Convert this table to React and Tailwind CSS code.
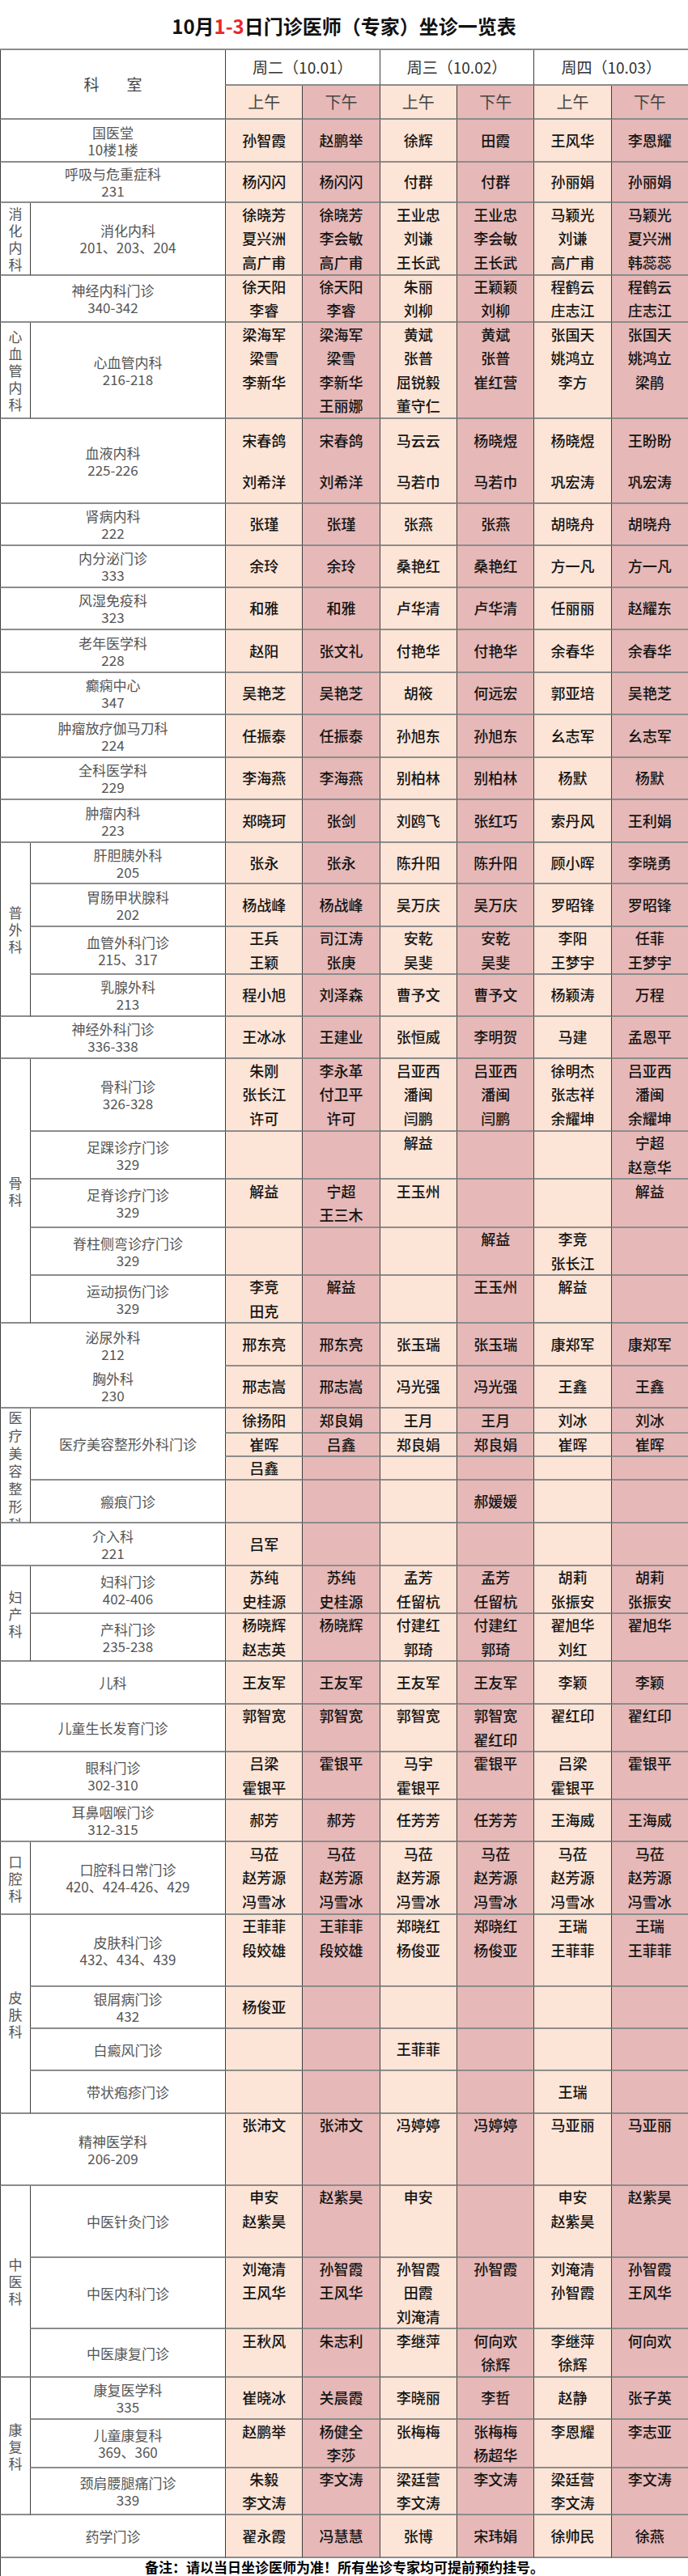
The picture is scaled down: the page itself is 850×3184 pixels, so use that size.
import React from 'react';

const LINE = 'border-[#3f3f3f]';
const HLINE = 'border-b-2 border-b-[#8c8c8c]';
const shade = ['bg-[#fce4d6]', 'bg-[#e6b8b7]'];

const R = (h, label, cols, slots = 1, more = {}) => ({ h, label, cols, slots, ...more });

const sections = [
  { row: R('h-[53px]', ['国医堂', '10楼1楼'], ['孙智霞', '赵鹏举', '徐辉', '田霞', '王风华', '李恩耀']) },
  { row: R('h-[50px]', ['呼吸与危重症科', '231'], ['杨闪闪', '杨闪闪', '付群', '付群', '孙丽娟', '孙丽娟']) },
  {
    group: '消化内科',
    rows: [
      R('h-[90px]', ['消化内科', '201、203、204'], [
        ['徐晓芳', '夏兴洲', '高广甫'],
        ['徐晓芳', '李会敏', '高广甫'],
        ['王业忠', '刘谦', '王长武'],
        ['王业忠', '李会敏', '王长武'],
        ['马颖光', '刘谦', '高广甫'],
        ['马颖光', '夏兴洲', '韩蕊蕊'],
      ], 3),
    ],
  },
  {
    row: R('h-[58px]', ['神经内科门诊', '340-342'], [
      ['徐天阳', '李睿'], ['徐天阳', '李睿'], ['朱丽', '刘柳'], ['王颖颖', '刘柳'], ['程鹤云', '庄志江'], ['程鹤云', '庄志江'],
    ], 2),
  },
  {
    group: '心血管内科',
    rows: [
      R('h-[119px]', ['心血管内科', '216-218'], [
        ['梁海军', '梁雪', '李新华'],
        ['梁海军', '梁雪', '李新华', '王丽娜'],
        ['黄斌', '张普', '屈锐毅', '董守仁'],
        ['黄斌', '张普', '崔红营'],
        ['张国天', '姚鸿立', '李方'],
        ['张国天', '姚鸿立', '梁鹃'],
      ], 4),
    ],
  },
  {
    row: R('h-[105px]', ['血液内科', '225-226'], [
      ['宋春鸽', '刘希洋'], ['宋春鸽', '刘希洋'], ['马云云', '马若巾'], ['杨晓煜', '马若巾'], ['杨晓煜', '巩宏涛'], ['王盼盼', '巩宏涛'],
    ], 2, { tall: true }),
  },
  { row: R('h-[52px]', ['肾病内科', '222'], ['张瑾', '张瑾', '张燕', '张燕', '胡晓舟', '胡晓舟']) },
  { row: R('h-[52px]', ['内分泌门诊', '333'], ['余玲', '余玲', '桑艳红', '桑艳红', '方一凡', '方一凡']) },
  { row: R('h-[52px]', ['风湿免疫科', '323'], ['和雅', '和雅', '卢华清', '卢华清', '任丽丽', '赵耀东']) },
  { row: R('h-[53px]', ['老年医学科', '228'], ['赵阳', '张文礼', '付艳华', '付艳华', '余春华', '余春华']) },
  { row: R('h-[52px]', ['癫痫中心', '347'], ['吴艳芝', '吴艳芝', '胡筱', '何远宏', '郭亚培', '吴艳芝']) },
  { row: R('h-[53px]', ['肿瘤放疗伽马刀科', '224'], ['任振泰', '任振泰', '孙旭东', '孙旭东', '幺志军', '幺志军']) },
  { row: R('h-[52px]', ['全科医学科', '229'], ['李海燕', '李海燕', '别柏林', '别柏林', '杨默', '杨默']) },
  { row: R('h-[53px]', ['肿瘤内科', '223'], ['郑晓珂', '张剑', '刘鸥飞', '张红巧', '索丹风', '王利娟']) },
  {
    group: '普外科',
    rows: [
      R('h-[51px]', ['肝胆胰外科', '205'], ['张永', '张永', '陈升阳', '陈升阳', '顾小晖', '李晓勇']),
      R('h-[53px]', ['胃肠甲状腺科', '202'], ['杨战峰', '杨战峰', '吴万庆', '吴万庆', '罗昭锋', '罗昭锋']),
      R('h-[59px]', ['血管外科门诊', '215、317'], [
        ['王兵', '王颖'], ['司江涛', '张庚'], ['安乾', '吴斐'], ['安乾', '吴斐'], ['李阳', '王梦宇'], ['任菲', '王梦宇'],
      ], 2),
      R('h-[52px]', ['乳腺外科', '213'], ['程小旭', '刘泽森', '曹予文', '曹予文', '杨颖涛', '万程']),
    ],
  },
  { row: R('h-[52px]', ['神经外科门诊', '336-338'], ['王冰冰', '王建业', '张恒威', '李明贺', '马建', '孟恩平']) },
  {
    group: '骨科',
    rows: [
      R('h-[90px]', ['骨科门诊', '326-328'], [
        ['朱刚', '张长江', '许可'],
        ['李永革', '付卫平', '许可'],
        ['吕亚西', '潘闽', '闫鹏'],
        ['吕亚西', '潘闽', '闫鹏'],
        ['徐明杰', '张志祥', '余耀坤'],
        ['吕亚西', '潘闽', '余耀坤'],
      ], 3),
      R('h-[59px]', ['足踝诊疗门诊', '329'], [[], [], ['解益'], [], [], ['宁超', '赵意华']], 2),
      R('h-[60px]', ['足脊诊疗门诊', '329'], [['解益'], ['宁超', '王三木'], ['王玉州'], [], [], ['解益']], 2),
      R('h-[59px]', ['脊柱侧弯诊疗门诊', '329'], [[], [], [], ['解益'], ['李竞', '张长江'], []], 2),
      R('h-[59px]', ['运动损伤门诊', '329'], [['李竞', '田克'], ['解益'], [], ['王玉州'], ['解益'], []], 2),
    ],
  },
  { row: R('h-[53px]', ['泌尿外科', '212'], ['邢东亮', '邢东亮', '张玉瑞', '张玉瑞', '康郑军', '康郑军'], 1, { open: true }) },
  { row: R('h-[52px]', ['胸外科', '230'], ['邢志嵩', '邢志嵩', '冯光强', '冯光强', '王鑫', '王鑫']) },
  {
    group: '医疗美容整形科',
    top: true,
    h: 'h-[142px]',
    rows: [
      R('h-[89px]', ['医疗美容整形外科门诊'], null, 1, {
        strips: [
          { h: 'h-[31px]', cols: ['徐扬阳', '郑良娟', '王月', '王月', '刘冰', '刘冰'] },
          { h: 'h-[29px]', cols: ['崔晖', '吕鑫', '郑良娟', '郑良娟', '崔晖', '崔晖'] },
          { h: 'h-[29px]', cols: ['吕鑫', '', '', '', '', ''] },
        ],
      }),
      R('h-[53px]', ['瘢痕门诊'], ['', '', '', '郝媛媛', '', '']),
    ],
  },
  { row: R('h-[53px]', ['介入科', '221'], ['吕军', '', '', '', '', '']) },
  {
    group: '妇产科',
    rows: [
      R('h-[59px]', ['妇科门诊', '402-406'], [
        ['苏纯', '史桂源'], ['苏纯', '史桂源'], ['孟芳', '任留杭'], ['孟芳', '任留杭'], ['胡莉', '张振安'], ['胡莉', '张振安'],
      ], 2),
      R('h-[59px]', ['产科门诊', '235-238'], [
        ['杨晓辉', '赵志英'], ['杨晓辉'], ['付建红', '郭琦'], ['付建红', '郭琦'], ['翟旭华', '刘红'], ['翟旭华'],
      ], 2),
    ],
  },
  { row: R('h-[53px]', ['儿科'], ['王友军', '王友军', '王友军', '王友军', '李颖', '李颖']) },
  {
    row: R('h-[59px]', ['儿童生长发育门诊'], [
      ['郭智宽'], ['郭智宽'], ['郭智宽'], ['郭智宽', '翟红印'], ['翟红印'], ['翟红印'],
    ], 2),
  },
  {
    row: R('h-[59px]', ['眼科门诊', '302-310'], [
      ['吕梁', '霍银平'], ['霍银平'], ['马宇', '霍银平'], ['霍银平'], ['吕梁', '霍银平'], ['霍银平'],
    ], 2),
  },
  { row: R('h-[52px]', ['耳鼻咽喉门诊', '312-315'], ['郝芳', '郝芳', '任芳芳', '任芳芳', '王海威', '王海威']) },
  {
    group: '口腔科',
    rows: [
      R('h-[90px]', ['口腔科日常门诊', '420、424-426、429'], [
        ['马莅', '赵芳源', '冯雪冰'],
        ['马莅', '赵芳源', '冯雪冰'],
        ['马莅', '赵芳源', '冯雪冰'],
        ['马莅', '赵芳源', '冯雪冰'],
        ['马莅', '赵芳源', '冯雪冰'],
        ['马莅', '赵芳源', '冯雪冰'],
      ], 3),
    ],
  },
  {
    group: '皮肤科',
    rows: [
      R('h-[89px]', ['皮肤科门诊', '432、434、439'], [
        ['王菲菲', '段姣雄'], ['王菲菲', '段姣雄'], ['郑晓红', '杨俊亚'], ['郑晓红', '杨俊亚'], ['王瑞', '王菲菲'], ['王瑞', '王菲菲'],
      ], 3),
      R('h-[52px]', ['银屑病门诊', '432'], ['杨俊亚', '', '', '', '', '']),
      R('h-[52px]', ['白癜风门诊'], ['', '', '王菲菲', '', '', '']),
      R('h-[53px]', ['带状疱疹门诊'], ['', '', '', '', '王瑞', '']),
    ],
  },
  { row: R('h-[89px]', ['精神医学科', '206-209'], ['张沛文', '张沛文', '冯婷婷', '冯婷婷', '马亚丽', '马亚丽'], 3) },
  {
    group: '中医科',
    rows: [
      R('h-[89px]', ['中医针灸门诊'], [
        ['申安', '赵紫昊'], ['赵紫昊'], ['申安'], [], ['申安', '赵紫昊'], ['赵紫昊'],
      ], 3),
      R('h-[88px]', ['中医内科门诊'], [
        ['刘淹清', '王风华'], ['孙智霞', '王风华'], ['孙智霞', '田霞', '刘淹清'], ['孙智霞'], ['刘淹清', '孙智霞'], ['孙智霞', '王风华'],
      ], 3),
      R('h-[60px]', ['中医康复门诊'], [
        ['王秋风'], ['朱志利'], ['李继萍'], ['何向欢', '徐辉'], ['李继萍', '徐辉'], ['何向欢'],
      ], 2),
    ],
  },
  {
    group: '康复科',
    rows: [
      R('h-[52px]', ['康复医学科', '335'], ['崔晓冰', '关晨霞', '李晓丽', '李哲', '赵静', '张子英']),
      R('h-[60px]', ['儿童康复科', '369、360'], [
        ['赵鹏举'], ['杨健全', '李莎'], ['张梅梅'], ['张梅梅', '杨超华'], ['李恩耀'], ['李志亚'],
      ], 2),
      R('h-[58px]', ['颈肩腰腿痛门诊', '339'], [
        ['朱毅', '李文涛'], ['李文涛'], ['梁廷营', '李文涛'], ['李文涛'], ['梁廷营', '李文涛'], ['李文涛'],
      ], 2),
    ],
  },
  { row: R('h-[53px]', ['药学门诊'], ['翟永霞', '冯慧慧', '张博', '宋玮娟', '徐帅民', '徐燕']) },
];

function NameCell({ names, slots = 1, tall, idx }) {
  const list = Array.isArray(names) ? names : names ? [names] : [];
  const lines = Array.from({ length: slots }, (_, i) => list[i] || '\u00a0');
  return (
    <div
      className={`flex min-w-0 flex-1 flex-col items-center justify-center border-l ${LINE} ${HLINE} ${shade[idx % 2]} text-[18px] font-medium text-[#141414]`}
    >
      {lines.map((n, i) => (
        <div key={i} className={tall ? 'leading-[51px]' : 'leading-[29.5px]'}>
          {n}
        </div>
      ))}
    </div>
  );
}

function Label({ lines, grouped, bottom = true }) {
  return (
    <div
      className={`flex shrink-0 flex-col items-center justify-center border-l ${LINE} ${bottom ? HLINE : ''} ${grouped ? 'w-[241px]' : 'w-[278px]'} bg-white text-[17px] leading-[21px] text-[#555]`}
    >
      {lines.map((l, i) => (
        <div key={i}>{l}</div>
      ))}
    </div>
  );
}

function Row({ r, grouped }) {
  return (
    <div className={`flex ${r.h}`}>
      <Label lines={r.label} grouped={grouped} bottom={!r.open} />
      {r.strips ? (
        <div className="flex flex-1 flex-col">
          {r.strips.map((s, si) => (
            <div key={si} className={`flex ${s.h}`}>
              {s.cols.map((c, i) => (
                <NameCell key={i} names={c} idx={i} />
              ))}
            </div>
          ))}
        </div>
      ) : (
        r.cols.map((c, i) => <NameCell key={i} names={c} slots={r.slots} tall={r.tall} idx={i} />)
      )}
    </div>
  );
}

function Group({ s }) {
  return (
    <div className={`flex ${s.h || ''}`}>
      <div
        className={`flex w-[37px] shrink-0 flex-col items-center overflow-hidden border-l ${LINE} ${HLINE} bg-white text-[17px] text-[#555] ${s.top ? 'justify-start leading-[22px]' : 'justify-center leading-[21px]'}`}
      >
        {[...s.group].map((c, i) => (
          <span key={i}>{c}</span>
        ))}
      </div>
      <div className="flex flex-1 flex-col">
        {s.rows.map((r, i) => (
          <Row key={i} r={r} grouped />
        ))}
      </div>
    </div>
  );
}

const App = () => {
  return (
    <div className="w-[850px] bg-white font-['Noto_Sans_CJK_SC','Noto_Sans',sans-serif]">
      <div className="flex h-[60px] items-center justify-center pt-1 text-[24px] font-bold text-[#111]">
        10月<span className="text-[#e8262b]">1-3</span>日门诊医师（专家）坐诊一览表
      </div>

      <div className="flex border-t-2 border-t-[#8c8c8c]">
        <div
          className={`flex h-[86px] w-[278px] shrink-0 items-center justify-center border-l ${LINE} ${HLINE} bg-white text-[19px] text-[#444]`}
        >
          <span>科</span>
          <span className="ml-[34px]">室</span>
        </div>
        <div className="flex flex-1 flex-col">
          <div className="flex h-[44px]">
            {['周二（10.01）', '周三（10.02）', '周四（10.03）'].map((d) => (
              <div
                key={d}
                className={`flex flex-1 items-center justify-center border-l ${LINE} ${HLINE} bg-white text-[19px] text-[#333]`}
              >
                {d}
              </div>
            ))}
          </div>
          <div className="flex h-[42px]">
            {[0, 1, 2, 3, 4, 5].map((i) => (
              <div
                key={i}
                className={`flex flex-1 items-center justify-center border-l ${LINE} ${HLINE} ${shade[i % 2]} text-[20px] text-[#444]`}
              >
                {i % 2 ? '下午' : '上午'}
              </div>
            ))}
          </div>
        </div>
      </div>

      {sections.map((s, i) => (s.group ? <Group key={i} s={s} /> : <Row key={i} r={s.row} />))}

      <div
        className={`h-[22px] overflow-hidden border-l ${LINE} bg-white text-center text-[17px] font-bold leading-[22px] text-black`}
      >
        备注：请以当日坐诊医师为准！所有坐诊专家均可提前预约挂号。
      </div>
    </div>
  );
};

export default App;
